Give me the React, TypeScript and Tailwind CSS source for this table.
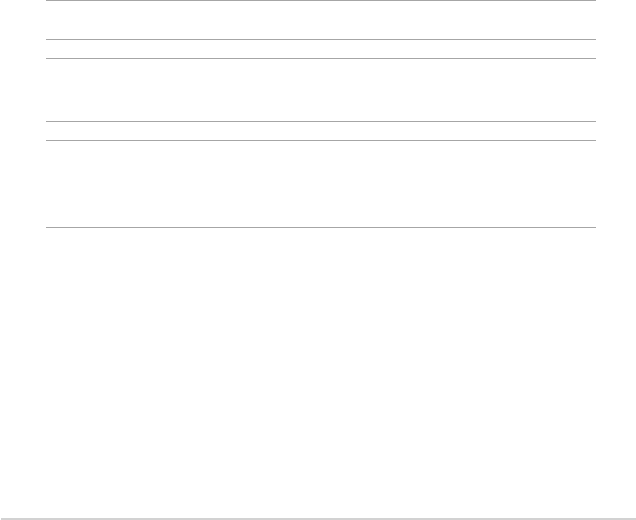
const blocks = [39, 63, 87];

export default function App() {
  return (
    <div className="flex h-[520px] w-[636px] flex-col bg-white">
      <div className="ml-[46px] flex w-[550px] flex-col gap-[18px]">
        {blocks.map((h, i) => (
          <div
            key={i}
            className="border-y border-[#a6a6a6]"
            style={{ height: h + 1 }}
          />
        ))}
      </div>
      <div className="mt-auto ml-[1px] h-[2px] bg-[#d2d2d2]" />
    </div>
  );
}
